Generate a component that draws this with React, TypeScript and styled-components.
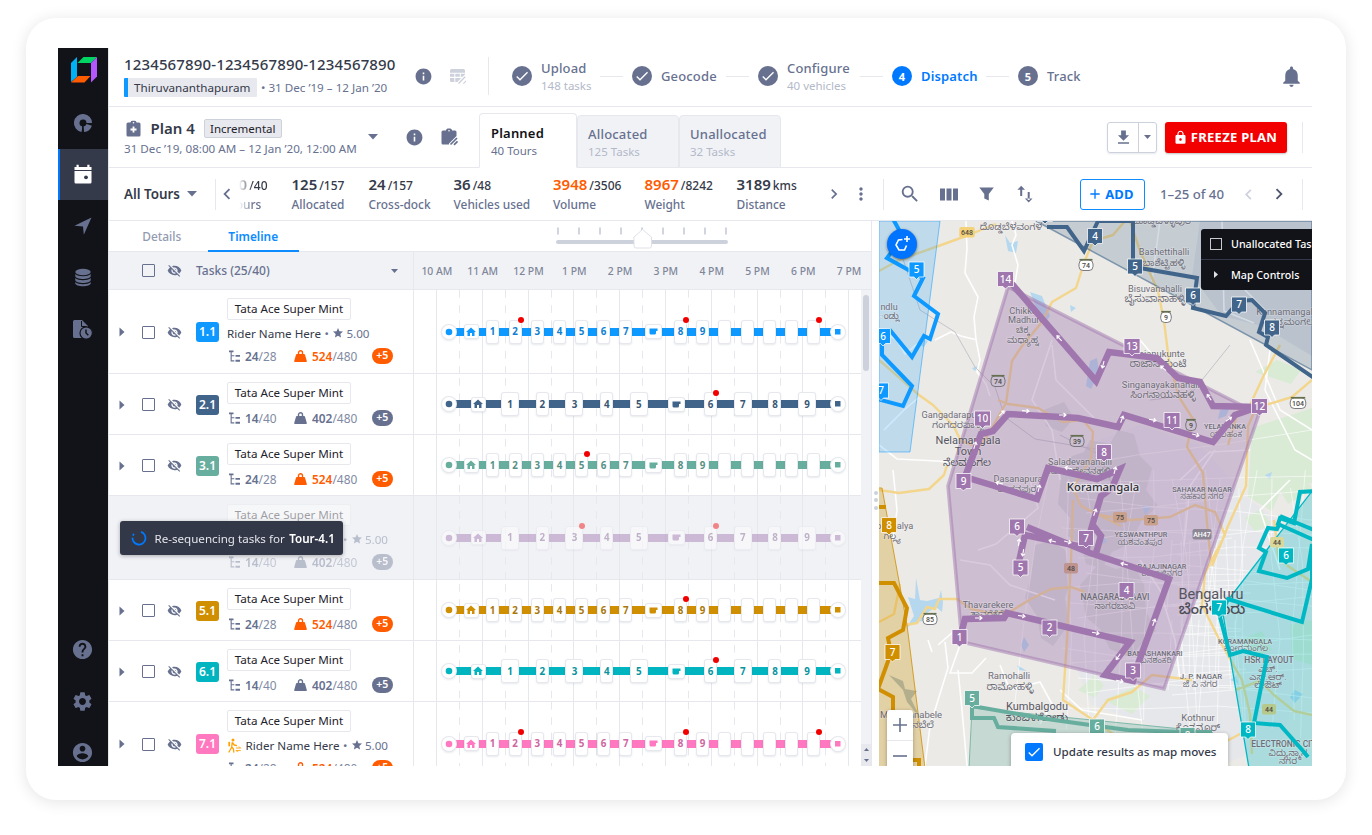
import React from "react";
import styled, { createGlobalStyle } from "styled-components";
import {
  MdInfo, MdLock, MdAdd, MdSearch, MdVisibilityOff, MdHelp, MdSettings,
  MdHome, MdStar, MdCheck, MdMoreVert, MdChevronLeft, MdChevronRight, MdFileDownload,
} from "react-icons/md";

const INK = "#353a4a";
const SLATE = "#67718f";
const MIST = "#b3b9c9";
const LINE = "#e6e8ee";
const PANEL = "#f1f2f6";
const BLUE = "#0079ff";
const ORANGE = "#ff5b00";
const RED = "#f20000";

const Global = createGlobalStyle`
  * { box-sizing: border-box; }
  html, body { margin: 0; background: #fff; }
  body { font-family: "Noto Sans", "Noto Sans Kannada", sans-serif; color: ${INK}; font-size: 11.65px; overflow: hidden; }
  svg { display: block; flex: none; }
`;

/* ---------- frame ---------- */

const Stage = styled.div`
  height: 835px;
  padding: 18px 26px 0;
`;
const Device = styled.div`
  width: 1320px;
  height: 782px;
  padding: 30px 34px 34px 32px;
  border-radius: 30px;
  background: #fff;
  box-shadow: 0 2px 16px rgba(0, 0, 0, 0.11);
`;
const Shell = styled.div`
  display: flex;
  width: 1254px;
  height: 718px;
  overflow: hidden;
`;
const Main = styled.div`
  flex: 1;
  min-width: 0;
  display: flex;
  flex-direction: column;
  border-left: 1px solid ${LINE};
`;
const Rule = styled.i<{ $h: number }>`
  width: 1px;
  height: ${(p) => p.$h}px;
  background: ${LINE};
  flex: none;
`;

/* ---------- sidebar ---------- */

const Rail = styled.nav`
  width: 50px;
  display: flex;
  flex-direction: column;
  flex: none;
  background: #121318;
  color: ${SLATE};
`;
const Brand = styled.div`
  height: 49px;
  padding: 8px 0 0 12px;
`;
const RailItem = styled.div<{ $active?: boolean }>`
  height: 51.6px;
  flex: none;
  display: flex;
  align-items: center;
  justify-content: center;
  padding-right: ${(p) => (p.$active ? 3 : 1)}px;
  border-left: ${(p) => (p.$active ? `2px solid ${BLUE}` : "0")};
  background: ${(p) => (p.$active ? "#343a4a" : "transparent")};
  color: ${(p) => (p.$active ? "#fff" : SLATE)};
`;
const RailFoot = styled.div`
  margin-top: auto;
  margin-bottom: -12.5px;
`;

/* ---------- header ---------- */

const TopBar = styled.header`
  height: 59px;
  flex: none;
  display: flex;
  align-items: center;
  padding: 0 11px 2px 15px;
  border-bottom: 1px solid ${LINE};
`;
const PlanTitle = styled.div`
  width: 289.5px;
  margin-top: -2px;
`;
const PlanId = styled.div`
  font-size: 15px;
  line-height: 20px;
  font-weight: 500;
  letter-spacing: 0.14px;
`;
const PlanMeta = styled.div`
  display: flex;
  align-items: center;
  gap: 4px;
  margin-top: 4px;
  color: ${SLATE};
  white-space: nowrap;
`;
const Region = styled.span`
  height: 19px;
  width: 133px;
  padding: 0 0 0 6px;
  border-left: 4px solid #0d99ff;
  border-radius: 1px;
  background: #e8e9ee;
  color: ${INK};
  line-height: 19px;
`;
const Steps = styled.div`
  display: flex;
  align-items: center;
  margin-left: 23px;
`;
const Step = styled.div`
  display: flex;
  align-items: center;
  gap: 9px;
`;
const StepDot = styled.span<{ $active?: boolean }>`
  width: 20px;
  height: 20px;
  border-radius: 50%;
  display: flex;
  align-items: center;
  justify-content: center;
  background: ${(p) => (p.$active ? BLUE : SLATE)};
  color: #fff;
  font-size: 11px;
  font-weight: 700;
`;
const StepText = styled.div<{ $w: number; $active?: boolean }>`
  width: ${(p) => p.$w}px;
  white-space: nowrap;
  font-size: 13px;
  line-height: 18px;
  font-weight: ${(p) => (p.$active ? 600 : 500)};
  letter-spacing: 0.15px;
  color: ${(p) => (p.$active ? BLUE : SLATE)};
  small {
    display: block;
    font-size: 11.5px;
    line-height: 17px;
    font-weight: 400;
    letter-spacing: 0;
    color: ${MIST};
  }
`;
const StepLine = styled.i`
  width: 23px;
  height: 1px;
  margin: 0 9px 0 8px;
  background: ${LINE};
`;
const Push = styled.div`
  margin-left: auto;
  display: flex;
  align-items: center;
`;

/* ---------- plan bar ---------- */

const PlanBar = styled.div`
  height: 61px;
  flex: none;
  display: flex;
  align-items: center;
  padding: 0 9px 0 15px;
  border-bottom: 1px solid ${LINE};
`;
const PlanInfo = styled.div`
  width: 243.5px;
  padding-top: 1px;
  white-space: nowrap;
  color: ${SLATE};
`;
const PlanHead = styled.div`
  display: flex;
  align-items: center;
  height: 22px;
  padding-left: 1.5px;
`;
const PlanName = styled.span`
  margin: 0 9px 0 10px;
  font-size: 15px;
  font-weight: 600;
  color: ${INK};
`;
const Tag = styled.span`
  width: 78px;
  height: 19px;
  line-height: 17px;
  text-align: center;
  border: 1px solid #cdd1dc;
  border-radius: 2px;
  background: #e8e9ee;
  color: #1f222c;
  font-size: 11.5px;
`;
const PlanDates = styled.div`
  line-height: 19px;
`;
const TourTabs = styled.div`
  display: flex;
  align-items: flex-end;
  align-self: flex-end;
  margin: 0 0 -1px 20.5px;
`;
const TourTab = styled.div<{ $active?: boolean; $w: number }>`
  width: ${(p) => p.$w}px;
  height: ${(p) => (p.$active ? 55 : 53)}px;
  padding: ${(p) => (p.$active ? "10px 0 0 11px" : "9px 0 0 10px")};
  border: 1px solid ${LINE};
  border-bottom: 1px solid ${(p) => (p.$active ? "#fff" : LINE)};
  border-radius: 4px 4px 0 0;
  background: ${(p) => (p.$active ? "#fff" : PANEL)};
  font-size: 13px;
  line-height: 18px;
  font-weight: ${(p) => (p.$active ? 600 : 500)};
  letter-spacing: 0.2px;
  color: ${(p) => (p.$active ? "#121318" : SLATE)};
  small {
    display: block;
    font-size: 11.5px;
    font-weight: 400;
    letter-spacing: 0;
    color: ${(p) => (p.$active ? SLATE : MIST)};
  }
`;
const SplitButton = styled.div`
  height: 31px;
  display: flex;
  align-items: stretch;
  border: 1px solid #cdd1dc;
  border-radius: 3px;
  box-shadow: 0 1px 2px rgba(60, 70, 100, 0.12);
  color: ${SLATE};
`;
const SplitPart = styled.span<{ $w: number }>`
  width: ${(p) => p.$w}px;
  display: flex;
  align-items: center;
  justify-content: center;
  & + & { border-left: 1px solid #cdd1dc; }
`;
const FreezeButton = styled.button`
  width: 122px;
  height: 31px;
  margin: 0 15px 0 8px;
  padding: 0 2px 0 0;
  display: flex;
  align-items: center;
  justify-content: center;
  gap: 3px;
  border: 0;
  border-radius: 3px;
  background: ${RED};
  color: #fff;
  font: 700 13px "Noto Sans", sans-serif;
  letter-spacing: 0.28px;
  white-space: nowrap;
  box-shadow: 0 1px 2px rgba(0, 0, 0, 0.25);
`;

/* ---------- metrics bar ---------- */

const MetricBar = styled.div`
  height: 53px;
  flex: none;
  display: flex;
  align-items: center;
  padding: 0 9px 0 15px;
  border-bottom: 1px solid ${LINE};
  color: ${SLATE};
  white-space: nowrap;
`;
const TourFilter = styled.div`
  width: 90.5px;
  display: flex;
  align-items: center;
  gap: 7px;
  font-size: 13.4px;
  font-weight: 600;
  color: ${INK};
  svg { color: ${SLATE}; }
`;
const ClippedMetric = styled.div`
  width: 54px;
  -webkit-mask-image: linear-gradient(90deg, transparent 1px, #000 15px);
  mask-image: linear-gradient(90deg, transparent 1px, #000 15px);
  overflow: hidden;
`;
const ClippedInner = styled.div`
  margin-left: -7.5px;
`;
const Metric = styled.div<{ $w: number }>`
  width: ${(p) => p.$w}px;
`;
const MetricValue = styled.div<{ $hot?: boolean }>`
  font-size: 12px;
  line-height: 19px;
  font-weight: 500;
  color: ${INK};
  b {
    margin-right: 2px;
    font-size: 15px;
    font-weight: 600;
    color: ${(p) => (p.$hot ? ORANGE : INK)};
  }
`;
const MetricLabel = styled.div`
  font-size: 11.9px;
  line-height: 19px;
  font-weight: 500;
`;
const Tools = styled.div`
  display: flex;
  align-items: center;
  margin-left: 15.5px;
  gap: 19px;
`;
const AddButton = styled.button`
  width: 65px;
  height: 31px;
  margin-left: auto;
  padding: 0 3px 0 0;
  display: flex;
  align-items: center;
  justify-content: center;
  gap: 2px;
  border: 1px solid #0d8cff;
  border-radius: 3px;
  background: #fff;
  color: ${BLUE};
  font: 700 13px "Noto Sans", sans-serif;
  letter-spacing: 0.2px;
`;
const PageRange = styled.span`
  width: 78px;
  margin-left: 15.5px;
  font-size: 13.2px;
  font-weight: 500;
`;
const Pager = styled.span<{ $off?: boolean; $r: number }>`
  width: 20px;
  margin-right: ${(p) => p.$r}px;
  color: ${(p) => (p.$off ? "#cdd1dc" : "#4d566f")};
`;

/* ---------- timeline panel ---------- */

const Workspace = styled.div`
  flex: 1;
  min-height: 0;
  display: flex;
`;
const Board = styled.section`
  width: 763px;
  flex: none;
  display: flex;
  flex-direction: column;
  border-right: 1px solid ${LINE};
`;
const ViewTabs = styled.div`
  height: 31px;
  flex: none;
  display: flex;
  border-bottom: 1px solid ${LINE};
`;
const ViewTab = styled.div<{ $active?: boolean; $w: number }>`
  width: ${(p) => p.$w}px;
  text-align: center;
  line-height: 31px;
  height: 31px;
  font-size: 11.9px;
  font-weight: ${(p) => (p.$active ? 600 : 500)};
  color: ${(p) => (p.$active ? "#0d8cff" : "#949bb0")};
  box-shadow: ${(p) => (p.$active ? "inset 0 -2px #0d8cff" : "none")};
  padding-left: ${(p) => (p.$active ? 0 : 7)}px;
`;
const ZoomScale = styled.div`
  margin: 4px 0 0 256px;
  height: 26px;
`;
const HeadRow = styled.div`
  height: 38px;
  flex: none;
  display: flex;
  background: ${PANEL};
  border-bottom: 1px solid ${LINE};
  color: ${SLATE};
`;
const HeadTasks = styled.div`
  width: 305px;
  flex: none;
  display: flex;
  align-items: center;
  padding-left: 33px;
  border-right: 1px solid ${LINE};
  font-size: 12px;
  font-weight: 500;
`;
const Hours = styled.div`
  display: flex;
  align-items: center;
  font-size: 10.4px;
  font-weight: 500;
  color: #7f8699;
`;
const Hour = styled.span`
  width: 45.8px;
  text-align: center;
  white-space: nowrap;
`;
const BoardBody = styled.div`
  flex: 1;
  min-height: 0;
  display: flex;
`;
const Rows = styled.div`
  width: 752px;
  flex: none;
  overflow: hidden;
`;
const ScrollTrack = styled.div`
  width: 10px;
  display: flex;
  flex-direction: column;
  align-items: center;
  padding-top: 5px;
  background: ${PANEL};
`;
const ScrollThumb = styled.i`
  width: 6px;
  height: 76px;
  border-radius: 3px;
  background: #cdd1dc;
`;
const ScrollArrows = styled.div`
  width: 10px;
  height: 22px;
  margin-top: auto;
  display: flex;
  flex-direction: column;
  align-items: center;
  justify-content: space-around;
  background: #e8e9ee;
`;
const Row = styled.div<{ $h: number; $busy?: boolean }>`
  position: relative;
  height: ${(p) => p.$h}px;
  display: flex;
  background: ${(p) => (p.$busy ? PANEL : "#fff")};
  border-bottom: 1px solid ${LINE};
`;
const RowInfo = styled.div`
  width: 305px;
  flex: none;
  display: flex;
  border-right: 1px solid ${LINE};
  color: ${SLATE};
`;
const Handles = styled.div<{ $hidden?: boolean }>`
  width: 118px;
  flex: none;
  display: flex;
  align-items: center;
  padding: 1px 0 0 10px;
  visibility: ${(p) => (p.$hidden ? "hidden" : "visible")};
`;
const Box = styled.i`
  width: 13px;
  height: 13px;
  flex: none;
  border: 1.5px solid ${SLATE};
  border-radius: 1px;
`;
const RowBox = styled(Box)`
  margin: 0 12px 0 17px;
`;
const HeadBox = styled(Box)`
  margin-right: 12px;
`;
const TourNo = styled.span<{ $c: string }>`
  width: 23px;
  height: 20px;
  margin-left: 14px;
  border-radius: 3px;
  background: ${(p) => p.$c};
  color: #fff;
  font-size: 12px;
  font-weight: 600;
  line-height: 19px;
  text-align: center;
`;
const Details = styled.div<{ $faded?: boolean }>`
  padding-top: 8px;
  opacity: ${(p) => (p.$faded ? 0.4 : 1)};
`;
const Vehicle = styled.div`
  width: 124px;
  height: 22px;
  border: 1px solid ${LINE};
  border-radius: 2px;
  background: #fff;
  color: #1f222c;
  font-size: 11.65px;
  line-height: 20px;
  text-align: center;
`;
const Rider = styled.div`
  display: flex;
  align-items: center;
  height: 18px;
  margin-top: 4px;
  margin-bottom: 3px;
  gap: 3.5px;
  color: ${INK};
  white-space: nowrap;
  span { color: ${SLATE}; }
  em { font-style: normal; color: ${SLATE}; }
`;
const RiderScore = styled.span`
  display: flex;
  align-items: center;
  gap: 2px;
`;
const Load = styled.div`
  height: 18px;
  margin-top: 4.5px;
  padding-left: 2px;
  display: flex;
  align-items: center;
  font-size: 11.9px;
  b { font-weight: 600; }
`;
const LoadText = styled.span<{ $w: number; $hot?: boolean }>`
  width: ${(p) => p.$w}px;
  padding-left: 5px;
  color: #808aa3;
  b { color: ${(p) => (p.$hot ? ORANGE : SLATE)}; }
`;
const More = styled.span<{ $hot?: boolean }>`
  width: 20.5px;
  height: 16px;
  border-radius: 8px;
  background: ${(p) => (p.$hot ? ORANGE : SLATE)};
  color: #fff;
  font-size: 10.5px;
  font-weight: 600;
  line-height: 15.5px;
  text-align: center;
`;
const Lane = styled.div`
  position: relative;
  flex: 1;
  display: flex;
  align-items: center;
`;
const LaneGrid = styled.svg`
  position: absolute;
  inset: 0;
`;
const Route = styled.div<{ $c: string; $faded?: boolean }>`
  position: relative;
  width: 404px;
  height: 24px;
  margin: 0 0 0 27.5px;
  display: flex;
  align-items: center;
  opacity: ${(p) => (p.$faded ? 0.45 : 1)};
  color: ${(p) => p.$c};
  background: linear-gradient(${(p) => p.$c}, ${(p) => p.$c}) 8px 8px / 388px 8px no-repeat;
`;
const Stop = styled.span<{ $w: number; $h: number; $gap: number; $round?: boolean; $c: string }>`
  position: relative;
  flex: none;
  width: ${(p) => p.$w}px;
  height: ${(p) => p.$h}px;
  margin-left: ${(p) => p.$gap}px;
  display: flex;
  align-items: center;
  justify-content: center;
  border-radius: ${(p) => (p.$round ? "50%" : "2px")};
  background: #fff;
  box-shadow: 0 0 0 1px ${LINE}, 0 1px 2px 1px rgba(60, 70, 100, 0.12);
  color: ${(p) => (p.$h > 20 ? `color-mix(in srgb, ${p.$c} 78%, #20242c)` : p.$c)};
  font-size: 9.8px;
  font-weight: 700;
`;
const Alert = styled.i`
  position: absolute;
  right: -3px;
  top: -3.5px;
  width: 6px;
  height: 6px;
  border-radius: 50%;
  background: ${RED};
`;
const Toast = styled.div`
  position: absolute;
  z-index: 2;
  left: 11px;
  top: 25px;
  width: 223px;
  height: 34px;
  padding-left: 10.5px;
  display: flex;
  align-items: center;
  gap: 8px;
  border-radius: 3px;
  background: #323848;
  color: #e3e5eb;
  font-size: 11.6px;
  white-space: nowrap;
  box-shadow: 0 1px 4px rgba(0, 0, 0, 0.3);
  b { margin-left: 1.5px; font-weight: 600; color: #fff; }
`;
const Grip = styled.div`
  width: 7px;
  flex: none;
  display: flex;
  flex-direction: column;
  justify-content: center;
  align-items: center;
  gap: 3.5px;
  padding-top: 13px;
  i { width: 4px; height: 4px; border-radius: 50%; background: #cdd1dc; }
`;

/* ---------- map panel ---------- */

const MapPane = styled.section`
  position: relative;
  flex: 1;
  overflow: hidden;
`;
const DrawButton = styled.div`
  position: absolute;
  left: 8px;
  top: 8px;
  width: 30px;
  height: 30px;
  border-radius: 50%;
  background: #0074ff;
  box-shadow: 0 1px 3px rgba(0, 0, 0, 0.5);
`;
const MapMenu = styled.div`
  position: absolute;
  left: 322px;
  top: 8px;
  width: 130px;
  height: 61px;
  border-radius: 3px;
  background: #121318;
  color: #fff;
  font-size: 10.7px;
  font-weight: 500;
  white-space: nowrap;
`;
const MapMenuRow = styled.div`
  height: 30px;
  padding-left: 9px;
  display: flex;
  align-items: center;
  & + & { border-top: 1px solid #343a4a; }
`;
const MenuMark = styled.span`
  width: 21px;
`;
const DarkBox = styled.i`
  display: block;
  width: 12px;
  height: 12px;
  border: 1px solid #c7cad2;
`;
const Zoomer = styled.div`
  position: absolute;
  left: 8px;
  top: 489px;
  width: 26px;
  height: 64px;
  border-radius: 3px;
  background: #fff;
  box-shadow: 0 1px 4px rgba(0, 0, 0, 0.3);
  color: ${SLATE};
`;
const ZoomKey = styled.div`
  height: 30px;
  display: flex;
  align-items: center;
  justify-content: center;
  & + & { border-top: 1px solid ${LINE}; }
`;
const FollowMap = styled.div`
  position: absolute;
  left: 132px;
  top: 512px;
  width: 217px;
  height: 40px;
  padding: 0 0 3px 14px;
  display: flex;
  align-items: center;
  gap: 10px;
  border-radius: 4px;
  background: #fff;
  box-shadow: 0 1px 4px rgba(0, 0, 0, 0.3);
  font-size: 11.6px;
  font-weight: 500;
  white-space: nowrap;
`;
const Ticked = styled.span`
  width: 18px;
  height: 18px;
  border-radius: 2px;
  display: flex;
  align-items: center;
  justify-content: center;
  background: ${BLUE};
  color: #fff;
`;

/* ---------- small drawings ---------- */

const Caret = ({ w = 10, h = 5.5 }: { w?: number; h?: number }) => (
  <svg width={w} height={h} viewBox="0 0 10 5" preserveAspectRatio="none"><path d="M0 0h10L5 5z" fill="currentColor" /></svg>
);
const Play = () => (
  <svg width="6" height="10" viewBox="0 0 6 10"><path d="M.500.500l5 4.500-5 4.500z" fill={SLATE} /></svg>
);
const LogoMark = () => (
  <svg width="28" height="28" viewBox="0 0 28 28">
    <path d="M1 7L7 1v20l-6 5z" fill="#00b1f5" />
    <path d="M7.500 7l6-6H27l-6 6z" fill="#00d563" />
    <path d="M27 1v19.500l-6 6V7z" fill="#b457ff" />
    <path d="M1 26.500l7-6.500h12.500l-6 6.500z" fill="#ff5b00" />
  </svg>
);
const DonutIcon = () => (
  <svg width="20" height="20" viewBox="0 0 20 20" fill="none" stroke="currentColor" strokeWidth="5.600">
    <path d="M10.800 16.200 A6.300 6.300 0 0 0 16.200 11.800" />
    <path d="M9 16.200 A6.300 6.300 0 1 1 16.300 10.200" />
    <path d="M9.800 11v8.500M11 10.500h8.500" stroke="#121318" strokeWidth="1.200" />
  </svg>
);
const CalendarIcon = () => (
  <svg width="20" height="20" viewBox="0 0 20 20">
    <path d="M1.500 3h2V.800h2.200V3h8.600V.800h2.200V3h2v3h-17zM1.500 7h17v11.200a1.300 1.300 0 0 1-1.300 1.300H2.800a1.300 1.300 0 0 1-1.300-1.300z" fill="#fff" />
    <circle cx="13" cy="13.300" r="1.900" fill="#343a4a" />
  </svg>
);
const PlaneIcon = () => (
  <svg width="18" height="18" viewBox="0 0 18 18"><path d="M17.500.500L.500 8.800 9 9.400l.800 8.300z" fill="currentColor" /></svg>
);
const StackIcon = () => (
  <svg width="18" height="19" viewBox="0 0 18 19" fill="currentColor">
    <ellipse cx="9" cy="4" rx="7.700" ry="3.200" />
    <path d="M1.300 6c2.500 3 12.900 3 15.400 0v1.900c0 4-15.400 4-15.400 0zM1.300 10c2.500 3 12.900 3 15.400 0v1.900c0 4-15.400 4-15.400 0zM1.300 14c2.500 3 12.900 3 15.400 0v1.200c0 4-15.400 4-15.400 0z" />
  </svg>
);
const FileClockIcon = () => (
  <svg width="21" height="21" viewBox="0 0 21 21">
    <path d="M1 2.500A1.500 1.500 0 0 1 2.500 1H10l6 6v3l-4 9H2.500A1.500 1.500 0 0 1 1 17.500z" fill="currentColor" />
    <path d="M9.500 2v5.500H15" stroke="#121318" fill="none" />
    <circle cx="14.200" cy="14" r="6.200" fill="currentColor" stroke="#121318" strokeWidth="1.200" />
    <path d="M14 10.500V14l2.300 2.200" stroke="#121318" strokeWidth="1.500" fill="none" />
  </svg>
);
const AccountIcon = () => (
  <svg width="23" height="23" viewBox="0 0 24 24" fill="currentColor">
    <path d="M12 2C6.480 2 2 6.480 2 12s4.480 10 10 10 10-4.480 10-10S17.520 2 12 2zm0 3c1.660 0 3 1.340 3 3s-1.340 3-3 3-3-1.340-3-3 1.340-3 3-3zm0 14.200c-2.500 0-4.710-1.280-6-3.220.03-1.990 4-3.080 6-3.080 1.990 0 5.970 1.090 6 3.080-1.290 1.940-3.500 3.220-6 3.220z" />
  </svg>
);
const BellIcon = () => (
  <svg width="25" height="25" viewBox="0 0 24 24" fill={SLATE}>
    <path d="M12 22c1.100 0 2-.9 2-2h-4c0 1.100.890 2 2 2zm6-6v-5c0-3.070-1.640-5.640-4.500-6.320V4c0-.830-.670-1.500-1.500-1.500s-1.500.670-1.500 1.500v.680C7.630 5.360 6 7.920 6 11v5l-2 2v1h16v-1l-2-2z" />
  </svg>
);
const TableEditIcon = () => (
  <svg width="17" height="17" viewBox="0 0 17 17" fill="#cdd1dc">
    <path d="M1.500 1h12A1.500 1.500 0 0 1 15 2.500V4.700H0V2.500A1.500 1.500 0 0 1 1.500 1zM0 5.800h4.300v3H0zM5.300 5.800h4.500v3H5.300zM10.800 5.800H15v.700l-2.300 2.300h-1.900zM0 9.900h4.300v4H1.500A1.500 1.500 0 0 1 0 12.400zM5.300 9.900h6l-4 4h-2z" />
    <path d="M8.300 14.700L14.700 8.300l1 1-6.400 6.400h-1zM12.500 15.700l3.500-3.500v1.500l-2 2z" />
  </svg>
);
const BoardPlusIcon = () => (
  <svg width="15" height="17" viewBox="0 0 15 17">
    <path d="M2 2.500h2.500V2.200A2 2 0 0 1 6.400.800h2.200a2 2 0 0 1 1.900 1.400v.300H13a1.500 1.500 0 0 1 1.500 1.500v11A1.500 1.500 0 0 1 13 16.500H2A1.500 1.500 0 0 1 .500 15V4A1.500 1.500 0 0 1 2 2.500z" fill={SLATE} />
    <path d="M7.500 6.500v6M4.500 9.500h6" stroke="#fff" strokeWidth="1.800" />
    <circle cx="7.500" cy="2.800" r=".8" fill="#fff" />
  </svg>
);
const BoardEditIcon = () => (
  <svg width="18" height="18" viewBox="0 0 18 18">
    <path d="M2 2.500h3V1.800L6.500.500h3L11 1.800v.700h3A1.500 1.500 0 0 1 15.500 4v4L8 15.500v1H2A1.500 1.500 0 0 1 .500 15V4A1.500 1.500 0 0 1 2 2.500z" fill={SLATE} />
    <path d="M9.500 16.500l6.500-6.500M13 16.800l3.500-3.500" stroke={SLATE} strokeWidth="1.700" />
    <circle cx="8" cy="2.700" r=".8" fill="#fff" />
  </svg>
);
const WalkerIcon = () => (
  <svg width="15" height="15" viewBox="0 0 15 15" fill="none" stroke="#ffa000" strokeLinecap="round" strokeLinejoin="round">
    <circle cx="6" cy="2" r="1.500" fill="#ffa000" stroke="none" />
    <path d="M2.200 4.600v3" strokeWidth="1.700" />
    <path d="M5.200 4.700L4.700 9l1.600 1.700.500 3.300M4.400 9.800L2 14M5.700 5l1.600 2 2 .500" strokeWidth="1.300" />
    <path d="M9.300 10h4M12.200 8.800L13.400 10M13.400 12.600h-4M10.500 13.800l-1.200-1.200" strokeWidth=".9" />
  </svg>
);
const TreeIcon = () => (
  <svg width="11" height="12" viewBox="0 0 11 12" fill={SLATE}>
    <path d="M0 .500h4.500v1.800H0zM1.600 2.300h1.100v2.900h2.600v1.100H2.700v4h2.600v1.100H1.600zM6.500 4.900H11v1.900H6.500zM6.500 9.800H11v1.900H6.500z" />
  </svg>
);
const WeightIcon = ({ hot }: { hot?: boolean }) => (
  <svg width="13" height="12" viewBox="0 0 13 12">
    <path d="M3 4h7a1 1 0 0 1 1 .800L12.800 11a.8.8 0 0 1-.8 1H1a.8.8 0 0 1-.8-1L2 4.800A1 1 0 0 1 3 4z" fill={hot ? ORANGE : SLATE} />
    <path d="M4.500 4.500V2.800a2 2 0 0 1 4 0v1.700" fill="none" stroke={hot ? ORANGE : SLATE} strokeWidth="1.400" />
  </svg>
);
const CupIcon = () => (
  <svg width="9" height="7" viewBox="0 0 9 7"><path d="M.500.500h8v2.600H7V5a1.500 1.500 0 0 1-1.500 1.500H2A1.500 1.500 0 0 1 .500 5z" fill="currentColor" /></svg>
);
const ColumnsIcon = () => (
  <svg width="18" height="13" viewBox="0 0 18 13"><path d="M0 .500h5v12H0zM6.500.500h5v12h-5zM13 .500h5v12h-5z" fill={SLATE} /></svg>
);
const FunnelIcon = () => (
  <svg width="19" height="14" viewBox="-2 0 19 14"><path d="M.300.500h14.500L9.800 7v6.500L5.300 11.500V7z" fill={SLATE} /></svg>
);
const SortIcon = () => (
  <svg width="20" height="18" viewBox="-2 0 20 18" fill={SLATE}>
    <path d="M3.200 3.500h2V11h-2zM4.200.700L8 4.700H.400zM10.700 7h2v8h-2zM11.700 17.500l3.800-4H7.900z" />
  </svg>
);
const Spinner = () => (
  <svg width="16" height="16" viewBox="0 0 16 16"><path d="M10 1.900A6.500 6.500 0 1 1 1.500 7.600M1.900 5.600A6.500 6.500 0 0 1 3 3.900" fill="none" stroke={BLUE} strokeWidth="1.800" /></svg>
);

/* ---------- data ---------- */

const steps = [
  { label: "Upload", sub: "148 tasks", w: 51 },
  { label: "Geocode", w: 57 },
  { label: "Configure", sub: "40 vehicles", w: 65 },
  { label: "Dispatch", w: 57, n: 4, active: true },
  { label: "Track", w: 36, n: 5 },
];

const metrics = [
  { v: "125", of: "/157", label: "Allocated", w: 77 },
  { v: "24", of: "/157", label: "Cross-dock", w: 85 },
  { v: "36", of: "/48", label: "Vehicles used", w: 99.5 },
  { v: "3948", of: "/3506", label: "Volume", w: 91.5, hot: true },
  { v: "8967", of: "/8242", label: "Weight", w: 92, hot: true },
  { v: "3189", of: "kms", label: "Distance", w: 87 },
];

const hours = ["10 AM", "11 AM", "12 PM", "1 PM", "2 PM", "3 PM", "4 PM", "5 PM", "6 PM", "7 PM"];

type StopDef = { c: number; w: number; k: string };
const dense: StopDef[] = [
  { c: 7, w: 14, k: "start" }, { c: 29.5, w: 13, k: "home" },
  ...[51, 73.6, 95.7, 118, 140, 162.2, 184.4].map((c, i) => ({ c, w: 11, k: String(i + 1) })),
  { c: 212, w: 15, k: "cup" }, { c: 239, w: 11, k: "8" }, { c: 261, w: 11, k: "9" },
  ...[283.2, 306, 328, 350, 372].map((c, i) => ({ c, w: 11, k: `blank${i}` })),
  { c: 396.5, w: 14, k: "end" },
];
const sparse: StopDef[] = [
  { c: 7, w: 14, k: "start" }, { c: 36.5, w: 13, k: "home" },
  { c: 68.5, w: 16, k: "1" }, { c: 100.8, w: 11, k: "2" }, { c: 133, w: 16, k: "3" },
  { c: 165.3, w: 11, k: "4" }, { c: 197.3, w: 16, k: "5" }, { c: 234.7, w: 15, k: "cup" },
  { c: 269, w: 11, k: "6" }, { c: 301.3, w: 16, k: "7" }, { c: 333.5, w: 11, k: "8" },
  { c: 365.5, w: 16, k: "9" }, { c: 396.5, w: 14, k: "end" },
];

type Tour = { no: string; color: string; light?: boolean; rider?: boolean; walk?: boolean; busy?: boolean; alerts: string[] };
const tours: Tour[] = [
  { no: "1.1", color: "#0d99ff", rider: true, alerts: ["2", "8", "blank4"] },
  { no: "2.1", color: "#41658a", light: true, alerts: ["6"] },
  { no: "3.1", color: "#68ae9f", alerts: ["5"] },
  { no: "4.1", color: "#a076ae", light: true, rider: true, walk: true, busy: true, alerts: ["3", "6"] },
  { no: "5.1", color: "#d08f00", alerts: ["8"] },
  { no: "6.1", color: "#00b4c0", light: true, alerts: ["6"] },
  { no: "7.1", color: "#ff78c0", rider: true, walk: true, alerts: ["2", "8", "blank4"] },
];

/* ---------- timeline parts ---------- */

function GridLines({ h }: { h: number }) {
  const first = h > 70 ? 0 : 4;
  return (
    <LaneGrid width="447" height={h - 1}>
      {hours.map((t, i) => (
        <g key={t} stroke={LINE}>
          <path d={`M${Math.round(22 + i * 45.8) + 0.5} 0V${h}`} />
          {i < 9 && <path d={`M${Math.round(45 + i * 45.8) + 0.5} ${first}V${h}`} strokeDasharray="7.600 7.650" />}
        </g>
      ))}
    </LaneGrid>
  );
}

function StopFace({ k }: { k: string }) {
  if (k === "start") return <svg width="8" height="8"><circle cx="4" cy="4" r="3.300" fill="currentColor" /></svg>;
  if (k === "end") return <svg width="6" height="6"><rect width="5.500" height="5.500" fill="currentColor" /></svg>;
  if (k === "home") return <MdHome size={12} />;
  if (k === "cup") return <CupIcon />;
  if (k.startsWith("blank")) return null;
  return <>{k}</>;
}

function RouteLine({ tour }: { tour: Tour }) {
  const list = tour.light ? sparse : dense;
  return (
    <Route $c={tour.color} $faded={tour.busy}>
      {list.map((s, i) => {
        const prev = i ? list[i - 1].c + list[i - 1].w / 2 : 0;
        const round = s.k === "start" || s.k === "end";
        const tall = !round && s.k !== "home" && s.k !== "cup";
        return (
          <Stop key={s.k} $c={tour.color} $w={s.w} $h={tall ? 22 : round ? 14 : 13} $gap={s.c - s.w / 2 - prev} $round={round}>
            <StopFace k={s.k} />
            {tour.alerts.includes(s.k) && <Alert />}
          </Stop>
        );
      })}
    </Route>
  );
}

function TourRow({ tour }: { tour: Tour }) {
  const h = tour.rider ? 84 : 61;
  const hot = !tour.light;
  return (
    <Row $h={h} $busy={tour.busy}>
      <RowInfo>
        <Handles $hidden={tour.busy}>
          <Play />
          <RowBox />
          <MdVisibilityOff size={15} />
          <TourNo $c={tour.color}>{tour.no}</TourNo>
        </Handles>
        <Details $faded={tour.busy}>
          <Vehicle>Tata Ace Super Mint</Vehicle>
          {tour.rider && (
            <Rider>
              {tour.walk && <WalkerIcon />}
              Rider Name Here <span>•</span>
              <RiderScore><MdStar size={12} color={SLATE} /><em>5.00</em></RiderScore>
            </Rider>
          )}
          <Load>
            <TreeIcon />
            <LoadText $w={54}><b>{hot ? 24 : 14}</b>/{hot ? 28 : 40}</LoadText>
            <WeightIcon hot={hot} />
            <LoadText $w={65} $hot={hot}><b>{hot ? 524 : 402}</b>/480</LoadText>
            <More $hot={hot}>+5</More>
          </Load>
        </Details>
      </RowInfo>
      <Lane>
        <GridLines h={h} />
        <RouteLine tour={tour} />
      </Lane>
      {tour.busy && <Toast><Spinner /><span>Re-sequencing tasks for <b>Tour-4.1</b></span></Toast>}
    </Row>
  );
}

/* ---------- map drawing ---------- */

const places: [number, number, number, string][] = [
  [1011, 230, 9.5, "ದೊಡ್ಡಬೆಳವಂಗಳ"], [1162, 224, 9.5, "ದೊಡ್ಡಬಳ್ಳಾಪುರ"],
  [889, 310, 9, "ndlu"], [889, 319, 9, "ಂಡ್ಲು"],
  [1023, 314, 9.2, "Chikka"], [1026, 323, 9.2, "Madhure"], [1023, 333, 9, "ಚಿಕ್ಕ"], [1023, 343, 9, "ಮಧ್ಯಾಹ್ನ"],
  [953, 418, 9.2, "Gangadarapura"], [958, 428, 9.5, "ಗಂಗದರಪಾಳ್ಯ"],
  [968, 444, 11, "Nelamangala"], [968, 455, 11, "Town"], [967, 466, 10.5, "ನೆಲಮಂಗಲ"],
  [1080, 465, 9.2, "Saladevanahalli"], [1080, 474, 9, "ಸೋಲದೇವನಹಳ್ಳಿ"],
  [1018, 482, 9.2, "Dasanapura"], [1017, 492, 9, "ದಾಸನಪುರ"],
  [1164, 255, 9.2, "Bashettihalli"], [1164, 266, 9.5, "ಬಾಶೆಟ್ಟಿಹಳ್ಳಿ"],
  [1155, 292, 9.2, "Bisuvanahalli"], [1155, 302, 10, "ಬೈಸುವಾನಾಹಳ್ಳಿ"],
  [1287, 315, 9.2, "Kannamangala"], [1292, 325, 9.5, "ಕನ್ನಮಂಗಲ"],
  [1159, 357, 9.4, "Rajanukunte"], [1158, 367, 10, "ರಾಜಾನುಕುಂಟೆ"],
  [1162, 388, 9.4, "Singanayakanahalli"], [1163, 398, 9.7, "ಸಿಂಗನಾಯನಹಳ್ಳಿ"],
  [1225, 429, 7.3, "YELAHANKA"], [1226, 437, 8, "ಯಲಹಂಕ"],
  [1202, 492, 7.3, "SAHAKAR NAGAR"], [1202, 499, 8, "ಸಹಕಾರ ನಗರ"],
  [1141, 537, 7.3, "YESWANTHPUR"], [1140, 545, 8, "ಯಶವಂತಪುರ"],
  [1162, 569, 7.3, "RAJAJINAGAR"], [1162, 576, 8, "ರಾಜಾಜಿನಗರ"],
  [1115, 600, 8.4, "NAAGARABHAAVI"], [1115, 609, 9, "ನಾಗರಬಾವಿ"],
  [1245, 644, 7.3, "KORAMANGALA"], [1246, 651, 8, "ಕೋರಮಂಗಲ"],
  [1155, 656, 7.3, "BANASHANKARI"], [1156, 663, 8, "ಬನಶಂಕರಿ"],
  [1269, 663, 8.4, "HSR LAYOUT"], [1268, 672, 9, "ಎಚ್."], [1268, 680, 9, "ಎಸ್.ಆರ್."], [1268, 688, 9, "ಲೇಔಟ್"],
  [1201, 679, 7.8, "J. P. NAGAR"], [1200, 687, 8.5, "ಜೆ ಪಿ ನಗರ"],
  [1198, 721, 9.5, "Kothnur"], [1198, 731, 10, "ಕೊತ್ತನೂರ್"],
  [1286, 747, 8.4, "ELECTRONIC CITY"], [1288, 756, 9, "ವಿದ್ಯುನ್ಮಾನ"], [1288, 764, 9, "ನಗರ"],
  [988, 608, 9.4, "Thavarekere"], [987, 617, 9, "ತಾವರೆಕೆರೆ"],
  [1009, 679, 9.5, "Ramohalli"], [1010, 690, 10, "ರಾಮೋಹಳ್ಳಿ"],
  [1037, 710, 11, "Kumbalgodu"], [1037, 721, 10.5, "ಕುಂಬಳಗೋಡು"],
  [911, 718, 9.5, "Manchanabele"], [911, 728, 9.5, "ಮಂಚನಬೆಲೆ"],
  [891, 529, 9.2, "Tippagalya"], [892, 539, 9, "ಗಲ್ಲ್ಯ"],
];

const shields: [number, number, string, string?][] = [
  [1086, 265, "74"], [998, 381, "74"], [1166, 317, "9"], [1191, 425, "9"], [1077, 441, "39"], [930, 619, "85"], [1298, 403, "104"],
  [967, 232, "648", "#f3d27a"], [1120, 517, "75", "#c9a08c"], [1151, 520, "75", "#c9a08c"], [1071, 568, "48", "#bf9490"],
  [1277, 542, "44", "#d9d89a"], [1269, 709, "44", "#b5c98c"], [1202, 534, "AH47", "#8d8795"],
];

const P = "#a076ae", D = "#41658a", B = "#0d99ff", O = "#d08f00", G = "#68ae9f", C = "#00b8c4";
const pins: [number, number, string, string][] = [
  [1005.5, 279, "14", P], [1132, 346, "13", P], [1259.5, 406, "12", P], [1172, 420, "11", P], [982.5, 418.5, "10", P],
  [963.5, 481, "9", P], [1104, 452, "8", P], [1086, 538, "7", P], [1017, 526.5, "6", P], [1020.5, 567.5, "5", P],
  [1126.5, 590, "4", P], [1133, 670.5, "3", P], [1049.5, 627.5, "2", P], [959.5, 637, "1", P],
  [1045, 214, "3", D], [1095, 236, "4", D], [1135, 266.5, "5", D], [1193, 295.5, "6", D], [1239, 304.5, "7", D], [1272, 327.5, "8", D],
  [916.5, 269.5, "5", B], [883, 336, "6", B], [881, 390.5, "7", B], [889, 525, "8", O], [892.5, 652, "7", O],
  [972, 698, "5", G], [1097, 726.5, "6", G], [1187.5, 735, "8", G],
  [1286, 555.5, "6", C], [1219, 607.5, "7", C], [1248, 729.5, "8", C],
];

const arrows: [number, number, number][] = [
  [1059, 338, 228], [1103, 365, 105], [1163, 368, 220], [1209, 397, 235], [1002, 413, -45], [1026, 411, 5], [1063, 415, 0],
  [975, 445, -72], [1122, 419, -70], [1153, 420, 12], [1196, 435, 15], [1229, 419, -35], [999, 483, 195], [1039, 488, -75],
  [1068, 468, 190], [1115, 470, -75], [1019, 542, -80], [1023, 553, 100], [1052, 541, 195], [1068, 542, 15], [1095, 512, -70],
  [1124, 564, 195], [1154, 622, -70], [1118, 657, 125], [979, 618, 0], [1022, 616, 8], [1096, 633, 10], [1120, 681, 12],
];

function CityMap() {
  const web: string[] = [];
  for (let i = 0; i < 17; i++) {
    const a = i * 23 + ((i * 7) % 5);
    web.push(`M${1050 + a * 0.74} ${470 + (i % 3) * 9}l${((i * 13) % 31) - 15} 75 ${((i * 17) % 25) - 12} 85 ${((i * 5) % 21) - 10} 90`);
    web.push(`M${1062 + (i % 4) * 8} ${468 + i * 15}l75 ${((i * 11) % 27) - 13} 80 ${((i * 7) % 21) - 10} 95 ${((i * 13) % 31) - 15}`);
  }
  for (let i = 0; i < 16; i++) {
    web.push(`M${1172 + (i % 8) * 9} ${540 + Math.floor(i / 8) * 80}l${((i * 7) % 11) - 5} 70`);
    web.push(`M${1172 + (i % 3) * 5} ${545 + i * 10}l${60 + (i % 4) * 9} ${((i * 7) % 15) - 7}`);
  }
  return (
    <svg width="433" height="545" viewBox="879 221 433 545">
      <rect x="879" y="221" width="433" height="545" fill="#ebeae7" />
      <path d="M1085 445l55-20 60 20 50 55 55 40 7 100-30 100-60 25-70-40-60-20-30-70z" fill="#e6e7ea" />
      <path d="M1044 410l20-8 10 16-12 14-16-6zM1062 470l10-14 12-4 6-12 20 4 8-14 16 4 6 22 12 12-6 22 12 16-16 14-12 24-18 8-10 16-16-4-4-18-14-10 2-18-12-14zM1035 545l16-4 14 9 6 30-6 18 4 26-16 22-12-8-4-22-12-18 6-22zM1080 585l20-22 16 6 18-4 10 20 2 26 10 20-12 10-14 16-20-8-10-20-14-12z" fill="#d5d8d9" />
      <path d="M1252 428l60-20v75l-26-4-14 32-24-14zM1268 470l30-20 14 40-24 14zM1255 372l22-12 24 10-10 14zM1078 690l16-14 10 9-9 13zM1104 700l30-13 16 9-18 18zM1240 640l22-9 10 19-20 9zM1290 625l22-5v45l-20-6zM1245 518l16-9 10 15-16 8z" fill="#d9ead5" />
      <path d="M1200 221h112v135l-50-30-40-10-30-40z" fill="#dbdde0" />
      <g fill="#b5d8ef">
        <path d="M1005 235l5 8 8-2-2 12-8-2zM1030 292l12 4 8 20-6 8-7-14zM1090 361l7-3 2 14-8 17-5-3zM908 597l7 2 1-21 4 22 7 1 12-3 2-8 2 12-1 10-6-5-9 6-4 8-7 1-10 6 8-12zM1220 410l10-3-4 9-8 3zM972 368l6-2-3 5zM1107 665l7 5-8-1zM1295 690l8 4-8 9-5-6zM1017 665l10 6-8-1zM1024 637l5 8-5 7-3-7zM1103 535l4 7-5 2zM1142 505l9 2-6 8zM920 338l8 3-4 6-7-3zM1070 305l6 3-5 4zM1230 680l6-4 2 7zM1265 475l7-3-2 7z" />
      </g>
      <path d="M889 675l14 6 2 8 12 2-6 8 10 20-14-17-4-12z" fill="#a8bcc4" />
      <g fill="none" stroke="#fff" strokeWidth="1">
        {web.map((d, i) => <path key={i} d={d} opacity={0.6} />)}
      </g>
      <g fill="none" stroke="#fff" strokeWidth="1.600" opacity=".95">
        <path d="M966 221l1 28-2 24 13 24-4 20 2 23 4 20-3 12 9 12 4 12M1012 221l4 14-4 10 6 20-3 18M935 340l16-8 10 4 16 4M879 330l18 10 8 14 12-10M884 430l20-20 14-12M1052 340l-20 60 20 30 8 50M1052 345l4 35 40 40M1140 340l30 35 25 5M925 766l5-40 18-58-3-26M938 645l14-12 8 12-10 28h22l14-15M958 670l4 40 5 56M879 445l18 14 40 2 20 2M893 470l4 40-4 30M928 640l4 12M1030 480l8 28-42 36-18 6M960 560l30 5 20 20 45 15M1000 665l10 25 30-8 12 22-12 20M1060 690l22 20 60 10M1140 560l20 30 15 50 5 40M1250 340l30 70 32 20M1270 350l-5 40 30 60 17 10M1290 480l-30 30 20 60M1180 480l30-28 40-2M1215 450l-25 36-6 60M1160 221l-8 60M1222 221l2 90 30 12M1245 290l20 20" />
      </g>
      <g fill="none" stroke="#c3c5ca" strokeWidth="1"><path d="M900 250l20 60 35 22 20 35 20 20 10 30 30 22 60 10M1150 400l40-5 40-50M1060 435l40 20 12 30" /></g>
      <g fill="none" stroke="#f3d68c" strokeWidth="2.400" strokeLinejoin="round">
        <path d="M879 271l20-11 45-16 22-8 30-12M1125 221l-12 14-20 6-9 22-8 25-24 14-10 20-20 24-10 15-6 42-20 35-10 12M998 400l10 4 30 4 25 14 20-2 10 12-2 26-18 30 8 18 40 20M1130 221l10 30 18 40 6 30 5 40 10 36 14 22-6 28 16 26 4 50 4 40M1312 380l-20 17-36 11-8 18-2 60-18 40-16 40M879 360l40 35 14 10 20 20 8 16 12 4M879 490l20 3 30-4 15-14 3-10M879 622l15-8 6-30M905 625l12-2 10-16 8 2 4-10 18 0 14 10 20 4 20-2 20-12 20-10 20-2 14 5M1073 500l-2 60-4 80-4 60 30 20 20 14 M1093 720l15-20 24-8 20-17 40 5M1240 405l-12 40M1280 345l-16 30-14 30M1100 515l30 5 40-3 25-12 20 7 10 23-20 38-3 32 20 40 20 35 8 34 2 40M1274 520l5 40 33 22M1235 690l25-9 14 14 20 16 18 4M1180 745l45-3 30-16" />
      </g>
      {/* service zones */}
      <path d="M879 221h61l-30 231h-31z" fill={B} fillOpacity=".2" stroke={B} strokeOpacity=".5" />
      <path d="M1036 221l276 149V221z" fill={D} fillOpacity=".22" stroke={D} strokeOpacity=".6" strokeWidth="1.500" />
      <path d="M876 488h6l25 137 18 143h-49z" fill={O} fillOpacity=".28" stroke={O} strokeOpacity=".8" />
      <path d="M972 708l240 24 10 36H969z" fill={G} fillOpacity=".28" stroke={G} strokeOpacity=".8" />
      <path d="M1316 486l-94 122 27 160h67z" fill={C} fillOpacity=".27" stroke={C} strokeWidth="1.300" />
      <path d="M1008 287l251 127-95 275-202-47-14-156z" fill={P} fillOpacity=".38" stroke={P} strokeOpacity=".5" strokeWidth="3.500" />
      {places.map(([x, y, s, t], i) => (
        <text key={i} x={x} y={y} fontSize={s} textAnchor="middle" fill={s > 10.4 ? "#55555f" : "#6e6d78"}
          stroke="#fff" strokeOpacity=".25" strokeWidth="1.500" paintOrder="stroke"
          fontFamily='Roboto, "Noto Sans Kannada", sans-serif' fontWeight={/^[A-Z. ]+$/.test(t) ? 500 : 400}>{t}</text>
      ))}
      {shields.map(([x, y, t, bg], i) => {
        const w = t.length * 3.5 + (t.length > 2 ? 5 : 7);
        return (
          <g key={i}>
            <rect x={x - w / 2} y={y - 5} width={w} height="10.500" rx={bg ? 2 : 4} fill={bg || (x < 1200 && x > 950 && y > 370 ? "#cbbfd2" : "#fff")} stroke={bg ? "none" : "#6d6d72"} strokeWidth=".9" />
            {!bg && <path d={`M${x - w / 2 + 0.5} ${y - 5.3}h${w - 1}`} stroke="#66704f" strokeWidth="1.600" />}
            <text x={x} y={y + 3} fontSize="7" fontFamily="Roboto, sans-serif" fontWeight="500" textAnchor="middle" fill={t === "AH47" ? "#fff" : "#4d4a45"}>{t}</text>
          </g>
        );
      })}
      <text x="1211" y="599" fontSize="14.500" textAnchor="middle" fill="#55555f" fontFamily="Roboto, sans-serif">Bengaluru</text>
      <text x="1212" y="614" fontSize="14.500" textAnchor="middle" fill="#4c4c55" fontWeight="500" fontFamily='"Noto Sans Kannada", sans-serif'>ಬೆಂಗಳೂರು</text>
      {/* routes */}
      <g fill="none" strokeWidth="4" strokeLinejoin="miter">
        <path stroke={B} d="M893 219l10 18-16 21 36 20-9 18 24 18-8 25-6-3-12 21-22-27-8 1v24l30 31-9 20-26-7" />
        <path stroke={D} d="M1047 227l20 0 17 24 14-30h35v44l7 3 57 10-4 30 33 8 13-15 13-1 13 13-6 19 9 5-2 8 48 33" />
        <path stroke={O} d="M877 507h9M877 583h17l13 25-4 22-15 8 3 15-13 36 15 8v22M911 760h8v10" />
        <path stroke={G} d="M972 706l75 13 43 6 38 5M972 706v12h22l4 9 58 4M1128 730l55 2M1188 732h24" />
        <path stroke={C} d="M1314 491l-14 1-6 31-14-5-2 6 36 16M1280 516l34 14M1279 525l-2 4-9-1-9 20 7 4-7 19 28 7 21-9 4-25 0 35-10 43-74-23-8 18 10 38 13-4 24 6-13 66 26 2 24 27 4 5" />
      </g>
      <g fill="none" stroke={P} strokeWidth="6.500" strokeLinejoin="miter">
        <path d="M1012 284l84 97 13-29 48 6 21 20 22 4 13 24 45 1-23 8-22 27-89-27-6 12-40-9-70-4-15 17-12 3-16 43 72 22 11-31 49 11 23-10-8 19-11 8-11 37-3 15-62-13-7 31M1027 527l63 26 79 26-31 85-5 17-28-6 25-33-123-29-3 5-39 1-4 15" />
        <path d="M1092 524l9 12-5 17" />
      </g>
      {arrows.map(([x, y, r], i) => (
        <path key={i} d="M-4 0h7M.500-2l2.500 2-2.500 2" transform={`translate(${x} ${y}) rotate(${r})`} fill="none" stroke="#fff" strokeWidth="1.100" />
      ))}
      {pins.map(([x, y, t, c], i) => {
        const r = t.length > 1 ? 8 : 7.5;
        return (
          <g key={i}>
            <path d={`M${x - r} ${y - 7.5}h${2 * r}v15h${-r + 2.5}l-2.500 2.500-2.500-2.500h${-r + 2.5}z`} fill={c} stroke="#fff" strokeOpacity=".75" strokeLinejoin="round" />
            <text x={x} y={y + 3.8} fontSize="10" fontWeight="500" textAnchor="middle" fill="#fff" fontFamily='"Noto Sans", sans-serif'>{t}</text>
          </g>
        );
      })}
      <text x="1103" y="490.500" fontSize="11.300" fontWeight="500" textAnchor="middle" fill="#2e2f38" stroke="#fff" strokeOpacity=".6" strokeWidth="2.500" paintOrder="stroke" fontFamily='"Noto Sans", sans-serif'>Koramangala</text>
    </svg>
  );
}

const PlanCaret = styled.span`
  width: 37px;
  color: ${SLATE};
`;
const IconSlot = styled.span<{ $w: number }>`
  width: ${(p) => p.$w}px;
  flex: none;
`;
const HeadCaret = styled.span`
  margin: 0 15px 0 auto;
`;
const HeadLabel = styled.span`
  margin-left: 14px;
`;

/* ---------- page ---------- */

export default function App() {
  return (
    <Stage>
      <Global />
      <Device>
        <Shell>
          <Rail>
            <Brand><LogoMark /></Brand>
            <RailItem><DonutIcon /></RailItem>
            <RailItem $active><CalendarIcon /></RailItem>
            <RailItem><PlaneIcon /></RailItem>
            <RailItem><StackIcon /></RailItem>
            <RailItem><FileClockIcon /></RailItem>
            <RailFoot>
              <RailItem><MdHelp size={23} /></RailItem>
              <RailItem><MdSettings size={23} /></RailItem>
              <RailItem><AccountIcon /></RailItem>
            </RailFoot>
          </Rail>
          <Main>
            <TopBar>
              <PlanTitle>
                <PlanId>1234567890-1234567890-1234567890</PlanId>
                <PlanMeta><Region>Thiruvananthapuram</Region>• 31 Dec ’19 – 12 Jan ’20</PlanMeta>
              </PlanTitle>
              <IconSlot $w={36}><MdInfo size={19} color={SLATE} /></IconSlot>
              <IconSlot $w={38.5}><TableEditIcon /></IconSlot>
              <Rule $h={38} />
              <Steps>
                {steps.map((s, i) => (
                  <React.Fragment key={s.label}>
                    {i > 0 && <StepLine />}
                    <Step>
                      <StepDot $active={s.active}>{s.n || <MdCheck size={16} />}</StepDot>
                      <StepText $w={s.w} $active={s.active}>{s.label}{s.sub && <small>{s.sub}</small>}</StepText>
                    </Step>
                  </React.Fragment>
                ))}
              </Steps>
              <Push><IconSlot $w={22}><BellIcon /></IconSlot></Push>
            </TopBar>

            <PlanBar>
              <PlanInfo>
                <PlanHead><BoardPlusIcon /><PlanName>Plan 4</PlanName><Tag>Incremental</Tag></PlanHead>
                <PlanDates>31 Dec ’19, 08:00 AM – 12 Jan ’20, 12:00 AM</PlanDates>
              </PlanInfo>
              <PlanCaret><Caret /></PlanCaret>
              <IconSlot $w={36}><MdInfo size={19} color={SLATE} /></IconSlot>
              <BoardEditIcon />
              <TourTabs>
                <TourTab $w={98} $active>Planned<small>40 Tours</small></TourTab>
                <TourTab $w={102}>Allocated<small>125 Tasks</small></TourTab>
                <TourTab $w={102}>Unallocated<small>32 Tasks</small></TourTab>
              </TourTabs>
              <Push>
                <SplitButton>
                  <SplitPart $w={30}><MdFileDownload size={19} /></SplitPart>
                  <SplitPart $w={18}><Caret w={7} h={4} /></SplitPart>
                </SplitButton>
                <FreezeButton><MdLock size={15} />FREEZE PLAN</FreezeButton>
                <Rule $h={31} />
              </Push>
            </PlanBar>

            <MetricBar>
              <TourFilter>All Tours <Caret /></TourFilter>
              <Rule $h={31} />
              <MdChevronLeft size={22} />
              <ClippedMetric>
                <ClippedInner>
                  <MetricValue><b>40</b>/40</MetricValue>
                  <MetricLabel>Tours</MetricLabel>
                </ClippedInner>
              </ClippedMetric>
              {metrics.map((m) => (
                <Metric key={m.label} $w={m.w}>
                  <MetricValue $hot={m.hot}><b>{m.v}</b>{m.of}</MetricValue>
                  <MetricLabel>{m.label}</MetricLabel>
                </Metric>
              ))}
              <IconSlot $w={27}><MdChevronRight size={20} /></IconSlot>
              <IconSlot $w={32}><MdMoreVert size={20} /></IconSlot>
              <Rule $h={31} />
              <Tools>
                <MdSearch size={22} />
                <ColumnsIcon />
                <FunnelIcon />
                <SortIcon />
              </Tools>
              <AddButton><MdAdd size={16} />ADD</AddButton>
              <PageRange>1–25 of 40</PageRange>
              <Pager $off $r={10}><MdChevronLeft size={21} /></Pager>
              <Pager $r={14}><MdChevronRight size={22} /></Pager>
              <Rule $h={31} />
            </MetricBar>

            <Workspace>
              <Board>
                <ViewTabs>
                  <ViewTab $w={98.5}>Details</ViewTab>
                  <ViewTab $w={91.5} $active>Timeline</ViewTab>
                  <ZoomScale>
                    <svg width="174" height="26" viewBox="0 0 174 26">
                      <path d="M3 2.500v7M24 2.500v7M45 2.500v7M66 2.500v7M87 2.500v7M108 2.500v7M129 2.500v7M150 2.500v7M171 2.500v7" stroke="#cdd1dc" strokeWidth="1.800" />
                      <rect x="1" y="15" width="172" height="4" rx="2" fill="#cdd1dc" />
                      <path d="M79 12L87.500 4.500 96.500 12v9a2 2 0 0 1-2 2H81a2 2 0 0 1-2-2z" fill="#fff" stroke="#dfe1e8" strokeLinejoin="round" />
                    </svg>
                  </ZoomScale>
                </ViewTabs>
                <HeadRow>
                  <HeadTasks>
                    <HeadBox />
                    <MdVisibilityOff size={15} />
                    <HeadLabel>Tasks (25/40)</HeadLabel>
                    <HeadCaret><Caret w={7} h={4} /></HeadCaret>
                  </HeadTasks>
                  <Hours>{hours.map((t) => <Hour key={t}>{t}</Hour>)}</Hours>
                </HeadRow>
                <BoardBody>
                  <Rows>{tours.map((t) => <TourRow key={t.no} tour={t} />)}</Rows>
                  <ScrollTrack>
                    <ScrollThumb />
                    <ScrollArrows>
                      <svg width="5" height="3"><path d="M0 3h5L2.500 0z" fill={SLATE} /></svg>
                      <svg width="5" height="3"><path d="M0 0h5L2.500 3z" fill={SLATE} /></svg>
                    </ScrollArrows>
                  </ScrollTrack>
                </BoardBody>
              </Board>
              <Grip><i /><i /><i /></Grip>
              <MapPane>
                <CityMap />
                <DrawButton>
                  <svg width="30" height="30" viewBox="0 0 30 30" fill="none" stroke="#fff" strokeWidth="1.600">
                    <path d="M15.500 10.500L11.500 11l-2.500 5 3 5h5.500l2-4.500M20 7v6M17 10h6" />
                  </svg>
                </DrawButton>
                <MapMenu>
                  <MapMenuRow><MenuMark><DarkBox /></MenuMark>Unallocated Tasks</MapMenuRow>
                  <MapMenuRow><MenuMark><svg width="9" height="7"><path d="M4 0l4 3.500L4 7z" fill="#dfe1e8" /></svg></MenuMark>Map Controls</MapMenuRow>
                </MapMenu>
                <Zoomer>
                  <ZoomKey><svg width="14" height="14"><path d="M7 0v14M0 7h14" stroke={SLATE} strokeWidth="1.600" /></svg></ZoomKey>
                  <ZoomKey><svg width="14" height="14"><path d="M0 7h14" stroke={SLATE} strokeWidth="1.600" /></svg></ZoomKey>
                </Zoomer>
                <FollowMap><Ticked><MdCheck size={16} /></Ticked>Update results as map moves</FollowMap>
              </MapPane>
            </Workspace>
          </Main>
        </Shell>
      </Device>
    </Stage>
  );
}
